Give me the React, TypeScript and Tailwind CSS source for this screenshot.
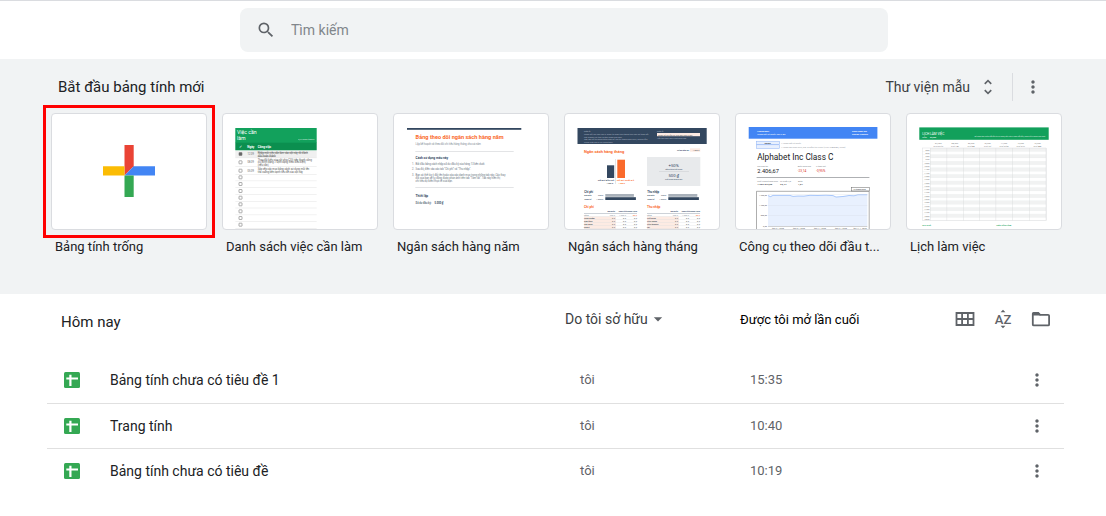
import { useId } from "react";
import type { ReactNode } from "react";
import { MdArrowDropDown, MdMoreVert, MdSearch, MdUnfoldMore } from "react-icons/md";

const NAVY = "#33475f";
const ORANGE = "#fa6a2c";

function Thumb({ children }: { children: ReactNode }) {
  return (
    <svg viewBox="0 0 154 115" className="block w-full" aria-hidden="true" fontFamily="Roboto, sans-serif">
      {children}
    </svg>
  );
}

function BlankThumb() {
  return (
    <Thumb>
      <g transform="translate(51 31)">
        <path fill="#ea4335" d="M21.5 0H30.7V21.3L21.5 30.5Z" />
        <path fill="#4285f4" d="M30.7 21.3H52V30.5H21.5Z" />
        <path fill="#34a853" d="M21.5 30.5H30.7V52H21.5Z" />
        <path fill="#fbbc04" d="M0 21.3H21.5V30.5H0Z" />
      </g>
    </Thumb>
  );
}

function TodoThumb() {
  const boxes = [40, 48.3, 56.7, 63.3, 70, 77, 83.7, 90.3, 97.3, 104, 110.7];
  const lines = [43.7, 52.3, 60, 66.7, 73.5, 80.3, 87, 93.8, 100.7, 107.3, 114];
  return (
    <Thumb>
      <rect x="12.3" y="14" width="81.4" height="15" fill="#12a15c" />
      <rect x="12.3" y="28.7" width="81.4" height="7.6" fill="#0b8f4f" />
      <g fill="#fff">
        <text x="14" y="20" fontSize="5.2">Việc cần</text>
        <text x="14" y="26" fontSize="5.2">làm</text>
        <text x="75" y="26.2" fontSize="2.4" opacity="0.8">2/3 hoàn thành</text>
        <text x="16" y="34" fontSize="4">✓</text>
        <text x="24.3" y="34" fontSize="3" fontWeight="700">Ngày</text>
        <text x="34.8" y="34" fontSize="3" fontWeight="700">Công việc</text>
      </g>
      <rect x="12.3" y="37" width="81.4" height="6.7" fill="#f0f0f0" />
      {lines.map((y) => (
        <rect key={y} x="12.3" y={y} width="81.4" height="0.4" fill="#dcdcdc" />
      ))}
      {boxes.map((y, i) => (
        <rect key={y} x="16" y={y - 1.5} width="3" height="3" rx="0.4" fill={i === 0 ? "#666" : "#fff"} stroke="#777" strokeWidth="0.6" />
      ))}
      <g fill="#666" fontSize="2.6">
        <text x="24.5" y="41">12.09</text>
        <text x="24.5" y="49.3">08.09</text>
        <text x="24.5" y="57.7">05.09</text>
        <g fill="#555">
          <text x="34.8" y="39.5" textDecoration="line-through">Nhập mỗi việc cần làm vào cột này rồi đánh</text>
          <text x="34.8" y="42.8" textDecoration="line-through">dấu hoàn thành</text>
          <text x="34.8" y="46.5">Thay đổi kiểu của cột chia CSS trên thanh công</text>
          <text x="34.8" y="49.3">cụ (Định dạng &gt; Định dạng theo điều kiện)</text>
          <text x="34.8" y="52">(nếu cần)</text>
          <text x="34.8" y="56.2">Sắp xếp các mục bằng cách sử dụng mũi tên</text>
          <text x="34.8" y="59.2">thả xuống bên cạnh tiêu đề của cột này</text>
        </g>
      </g>
    </Thumb>
  );
}

function AnnualThumb() {
  return (
    <Thumb>
      <rect x="13" y="14" width="114.3" height="1.8" fill={NAVY} />
      <text x="21.6" y="24.8" fontSize="5.6" fontWeight="700" fill={ORANGE}>Bảng theo dõi ngân sách hàng năm</text>
      <text x="21.6" y="31.2" fontSize="2.6" fill="#7d8791">Lập kế hoạch và theo dõi chi tiêu hàng tháng cho cả năm</text>
      <rect x="21.3" y="37" width="98.4" height="0.6" fill="#d0d3d6" />
      <text x="21.6" y="44.5" fontSize="3.2" fontWeight="700" fill={NAVY}>Cách sử dụng mẫu này</text>
      <g fontSize="2.6" fill="#68737e">
        <text x="18" y="50.5">1.</text>
        <text x="21.6" y="50.5">Bắt đầu bằng cách nhập số dư đầu kỳ của hàng 13 bên dưới.</text>
        <text x="18" y="56">2.</text>
        <text x="21.6" y="56">Sau đó, điền vào các tab "Chi phí" và "Thu nhập".</text>
        <text x="18" y="62">3.</text>
        <text x="21.6" y="62">Bạn có thể tùy ý đổi tên hoặc xóa các danh mục trong những tab này. Các thay</text>
        <text x="21.6" y="65">đổi của bạn sẽ tự động được phản ánh trên tab "Tóm tắt". Tab này hiển thị</text>
        <text x="21.6" y="68">chi tiêu dự kiến/thực tế của bạn.</text>
      </g>
      <rect x="21.3" y="73.4" width="98.4" height="0.6" fill="#d0d3d6" />
      <text x="21.6" y="83" fontSize="3.2" fontWeight="700" fill={NAVY}>Thiết lập</text>
      <text x="21.6" y="89.5" fontSize="2.6" fontWeight="700" fill="#68737e">Số dư đầu kỳ:</text>
      <text x="40.5" y="89.5" fontSize="2.6" fontWeight="700" fill={NAVY}>5.000 ₫</text>
    </Thumb>
  );
}

function BudgetTable({ x, title, rows }: { x: number; title: string; rows: string[] }) {
  return (
    <g>
      <text x={x} y="93.8" fontSize="3.2" fontWeight="700" fill={ORANGE}>{title}</text>
      <g fontSize="2.2" fontWeight="700" fill={NAVY}>
        <text x={x + 31} y="98.2" textAnchor="end">Dự kiến</text>
        <text x={x + 42} y="98.2" textAnchor="end">Thực tế</text>
        <text x={x + 53} y="98.2" textAnchor="end">Chênh lệch</text>
      </g>
      <rect x={x} y="99.2" width="53" height="0.5" fill="#9aa5b1" />
      <rect x={x} y="102.5" width="32" height="12.5" fill="#fdebe3" />
      {rows.map((row, i) => {
        const y = 101.9 + i * 3;
        const ink = i === 0 ? "#8e979f" : "#4d545c";
        return (
          <g key={row} fontSize="2.1" fill={ink}>
            <rect x={x} y={y + 0.6} width="53" height="0.3" fill="#d8dbde" />
            <text x={x} y={y} fontWeight="700">{row}</text>
            <text x={x + 31} y={y} textAnchor="end">{i === 0 ? "950 ₫" : "0 ₫"}</text>
            <text x={x + 42} y={y} textAnchor="end">{i === 0 ? "1.000 ₫" : "0 ₫"}</text>
            <text x={x + 53} y={y} textAnchor="end" fill={i === 0 ? ORANGE : ink}>{i === 0 ? "-50 ₫" : "0 ₫"}</text>
          </g>
        );
      })}
    </g>
  );
}

function PlannedBars({ x, title, gray, dark }: { x: number; title: string; gray: number; dark: number }) {
  return (
    <g fontSize="2.1" fontWeight="700" fill={NAVY}>
      <text x={x} y="78.5" fontSize="2.8">{title}</text>
      <text x={x} y="82.4">Dự kiến</text>
      <text x={x + 19} y="82.4" textAnchor="end" fontWeight="400">950 ₫</text>
      <text x={x} y="85.7">Thực tế</text>
      <text x={x + 19} y="85.7" textAnchor="end" fontWeight="400">1.000 ₫</text>
      <rect x={x + 21} y="80" width={gray} height="2.8" fill="#a9b1ba" />
      <rect x={x + 21} y="83.2" width={dark} height="2.8" />
    </g>
  );
}

function MonthlyThumb() {
  return (
    <Thumb>
      <rect x="12.5" y="14" width="129.2" height="16" fill={NAVY} />
      <g fontSize="2.2" fill="#a9b4c0">
        <text x="19" y="18" fontWeight="700">LƯU Ý:</text>
        <text x="19" y="21">Nhập dữ liệu vào các ô được tô màu trên trang tính này để theo dõi</text>
        <text x="19" y="23.5">các khoản chi tiêu và thu nhập của bạn.</text>
        <text x="19" y="26">Tab này sẽ tự động tổng hợp số liệu từ trang Giao dịch, không cần</text>
        <text x="19" y="28.5">chỉnh sửa các ô có công thức.</text>
        <text x="92" y="18" fontWeight="700">LƯU Ý:</text>
        <text x="92" y="25">Hãy tạo bản sao của trang này</text>
      </g>
      <rect x="92" y="19" width="43" height="3.2" fill="#fdebe3" />
      <text x="93" y="21.5" fontSize="2.1" fill="#555">Nhập số dư đầu kỳ của bạn vào ô này</text>
      <text x="19" y="38.8" fontSize="4" fontWeight="700" fill={ORANGE}>Ngân sách hàng tháng</text>
      <text x="112" y="36.8" fontSize="2" fontWeight="700" fill={NAVY}>Số dư đầu kỳ:</text>
      <rect x="125" y="34.3" width="10.3" height="3.4" fill="#fdebe3" />
      <text x="134.5" y="36.9" fontSize="2" textAnchor="end" fill="#555">1.000 ₫</text>
      <rect x="42" y="51.3" width="7.2" height="12.7" fill={NAVY} />
      <rect x="52.3" y="45.7" width="7.7" height="18.3" fill={ORANGE} />
      <rect x="50.5" y="45" width="0.4" height="25" fill="#bcc1c6" />
      <g fontSize="2.5" fontWeight="700">
        <text x="49.3" y="66.9" textAnchor="end" fill={NAVY}>SỐ DƯ ĐẦU KỲ</text>
        <text x="51.8" y="66.9" fill={ORANGE}>SỐ DƯ CUỐI KỲ</text>
        <text x="48" y="69.6" fontSize="1.9" textAnchor="end" fill={NAVY}>1.000 ₫</text>
        <text x="53.5" y="69.6" fontSize="1.9" fill={ORANGE}>1.500 ₫</text>
      </g>
      <rect x="82" y="43" width="53.3" height="29" fill="#e8eaec" />
      <g textAnchor="middle" fill={NAVY}>
        <text x="108.7" y="53" fontSize="4.2">+50%</text>
        <text x="108.7" y="55.6" fontSize="2">Tăng tổng tiết kiệm</text>
        <text x="108.7" y="63.4" fontSize="4.2">500 ₫</text>
        <text x="108.7" y="66" fontSize="2">Tiết kiệm tháng này</text>
      </g>
      <rect x="94" y="57.5" width="30" height="0.4" fill="#c2c6ca" />
      <PlannedBars x={19.3} title="Chi phí" gray={28.6} dark={30.6} />
      <PlannedBars x={82.3} title="Thu nhập" gray={29} dark={30.6} />
      <BudgetTable x={19} title="Chi phí" rows={["Tổng", "Thực phẩm", "Quà tặng", "Sức khỏe", "Nhà ở"]} />
      <BudgetTable x={82} title="Thu nhập" rows={["Tổng", "Tiết kiệm", "Tiền lương", "Tiền thưởng", "Lãi"]} />
    </Thumb>
  );
}

function InvestThumb() {
  const gridY = [80.7, 91, 101.4, 112];
  const yLabels = ["1.600,00", "1.200,00", "800,00", "0,00"];
  return (
    <Thumb>
      <rect x="12.7" y="13" width="128.7" height="11.7" fill="#4285f4" />
      <g fill="#fff" fontSize="2.3">
        <text x="21.3" y="17.8" fontWeight="700">Hướng dẫn:</text>
        <text x="21.3" y="20.6">Nhập mã cổ phiếu vào ô B5</text>
        <text x="116" y="17.8" fontWeight="700">Chọn ngày lưu</text>
        <text x="116" y="21.2" fontWeight="700">Google Finance</text>
      </g>
      <rect x="20.4" y="27.2" width="23.2" height="3.4" fill="#e8f0fe" stroke="#8ab0f5" strokeWidth="0.5" />
      <rect x="20.4" y="30.8" width="23.2" height="3.6" fill="#e8f0fe" stroke="#8ab0f5" strokeWidth="0.5" />
      <text x="31.7" y="29.9" fontSize="2.4" fontWeight="700" textAnchor="middle" fill="#3c4043">GOOG</text>
      <g fontSize="2.2" fill="#9aa0a6">
        <text x="44.5" y="29.8">← Nhập mã cổ phiếu</text>
        <text x="44.5" y="33.8">← Nhập sàn giao dịch, đây là phần tùy chọn (ví dụ: NASDAQ, NYSE)</text>
      </g>
      <text x="21.2" y="45.5" fontSize="8.3" fill="#202124">Alphabet Inc Class C</text>
      <g fontSize="2.2" fill="#80868b">
        <text x="21.2" y="52.8">Giá hiện tại</text>
        <text x="61.7" y="52.8">Biến động giá</text>
        <text x="80" y="52.8">% thay đổi</text>
        <text x="21.2" y="68.2">Khối lượng trung bình</text>
        <text x="44" y="68.2">Tỷ suất P/E</text>
        <text x="62" y="68.2">Beta</text>
      </g>
      <text x="21.2" y="59" fontSize="5.7" fill="#202124">2.406,67</text>
      <g fontSize="3.2" fill="#d93025">
        <text x="61.7" y="58.4">-23,14</text>
        <text x="80" y="58.4">-0,95%</text>
      </g>
      <rect x="20.6" y="63" width="112.8" height="0.8" fill="#9a9da0" />
      <g fontSize="2.5" fontWeight="700" fill="#3c4043">
        <text x="21.2" y="71.3">1.359.549,00</text>
        <text x="44" y="71.3">33,44</text>
        <text x="62" y="71.3">1,01</text>
      </g>
      <rect x="115.3" y="73.6" width="18" height="3.4" fill="#fff" stroke="#666" strokeWidth="0.5" />
      <text x="117" y="76.2" fontSize="2.2" fill="#3c4043">12 tháng qua</text>
      <path d="M20.5 115V77.3H133.2V115" fill="none" stroke="#777" strokeWidth="0.6" />
      <path d="M32 81.6L34.5 82.6L37 81.4H54L57 82.4L62 82L68 82.1L74 81.3L82 81.5L90 81.2L97 81.6L100 83L107 82.5L113 81.5L118 81.8L122 80.7H131.3V112H32Z" fill="#e8f0fe" />
      <path d="M32 81.6L34.5 82.6L37 81.4H54L57 82.4L62 82L68 82.1L74 81.3L82 81.5L90 81.2L97 81.6L100 83L107 82.5L113 81.5L118 81.8L122 80.7H131.3" fill="none" stroke="#5c97f6" strokeWidth="0.5" />
      {gridY.map((y, i) => (
        <g key={y}>
          <rect x="32" y={y} width="99.3" height="0.3" fill={i === 3 ? "#5f6368" : "#d3dae4"} />
          <text x="31" y={y + 0.8} fontSize="2.1" textAnchor="end" fill="#5f6368">{yLabels[i]}</text>
        </g>
      ))}
      {[42, 63, 84, 105, 124].map((x, i) => (
        <text key={x} x={x} y="114.9" fontSize="2.1" textAnchor="middle" fill="#5f6368">{`thg ${i * 2 + 3} 1, 2020`}</text>
      ))}
    </Thumb>
  );
}

function ScheduleThumb() {
  const cols = [23, 39.7, 56, 72.3, 88.7, 105.3, 122, 139];
  const days = ["CN", "HAI", "BA", "TƯ", "NĂM", "SÁU", "BẢY"];
  const rows = Array.from({ length: 22 }, (_, i) => i);
  return (
    <Thumb>
      <rect x="12.3" y="13.4" width="129.4" height="12.4" fill="#12a05b" />
      <g fill="#fff">
        <text x="15.3" y="20.6" fontSize="3.2">LỊCH LÀM VIỆC</text>
        <text x="15.3" y="23.6" fontSize="1.9">Tuần:</text>
        <text x="23" y="23.6" fontSize="1.9" fontWeight="700">07/Th9</text>
        <text x="138" y="22.8" fontSize="1.8" textAnchor="end" opacity="0.8">Để nhập thời điểm bắt đầu từ T2 hàng, hãy sửa ô ngày bắt đầu, bảng sẽ tự động cập nhật</text>
      </g>
      {days.map((day, i) => (
        <g key={day} fontSize="2" textAnchor="middle" fill="#777">
          <text x={(cols[i] + cols[i + 1]) / 2} y="30.4">{`${String(i + 7).padStart(2, "0")}/Th9`}</text>
          <text x={(cols[i] + cols[i + 1]) / 2} y="32.7">{i === 0 ? "CHỦ NHẬT" : `THỨ ${day}`}</text>
        </g>
      ))}
      {rows.map((i) => (
        <g key={i}>
          {i % 2 === 0 && <rect x="23" y={34 + i * 3.3} width="116" height="3.3" fill="#f1f2f2" />}
          <text x="22.3" y={36.5 + i * 3.3} fontSize="2" textAnchor="end" fill="#777">{`${8 + Math.floor(i / 2)}:${i % 2 ? "30" : "00"}`}</text>
          <rect x="15.3" y={37.2 + i * 3.3} width="123.7" height="0.25" fill="#e3e5e7" />
        </g>
      ))}
      <rect x="15.3" y="34" width="123.7" height="72.6" fill="none" stroke="#d5d7da" strokeWidth="0.4" />
      {cols.map((x) => (
        <rect key={x} x={x} y="34" width="0.4" height="72.6" fill="#d6d8da" />
      ))}
      <g fontSize="2.2" fontWeight="700" fill="#12a05b">
        <text x="15.3" y="112">GHI CHÚ</text>
        <text x="89.3" y="112">VIỆC CẦN LÀM</text>
      </g>
    </Thumb>
  );
}

const templates: { label: string; thumb: ReactNode; marked?: boolean }[] = [
  { label: "Bảng tính trống", thumb: <BlankThumb />, marked: true },
  { label: "Danh sách việc cần làm", thumb: <TodoThumb /> },
  { label: "Ngân sách hàng năm", thumb: <AnnualThumb /> },
  { label: "Ngân sách hàng tháng", thumb: <MonthlyThumb /> },
  { label: "Công cụ theo dõi đầu t...", thumb: <InvestThumb /> },
  { label: "Lịch làm việc", thumb: <ScheduleThumb /> },
];

const files = [
  { name: "Bảng tính chưa có tiêu đề 1", owner: "tôi", opened: "15:35" },
  { name: "Trang tính", owner: "tôi", opened: "10:40" },
  { name: "Bảng tính chưa có tiêu đề", owner: "tôi", opened: "10:19" },
];

function SheetIcon() {
  return (
    <svg viewBox="0 0 16 16" className="size-4 shrink-0" aria-hidden="true">
      <rect width="16" height="16" rx="1.5" fill="#34a853" />
      <path d="M5.3 2.7H7.5V5.5H14V7.5H7.5V14H5.3V7.5H2.3V5.5H5.3Z" fill="#fff" />
    </svg>
  );
}

function GridIcon() {
  return (
    <svg viewBox="0 0 20 20" className="size-5" aria-hidden="true">
      <path d="M1.5 4H18.5V16H1.5ZM1.5 10H18.5M7.1 4V16M12.9 4V16" fill="none" stroke="currentColor" strokeWidth="1.8" />
    </svg>
  );
}

function SortIcon() {
  return (
    <svg viewBox="0 0 20 20" className="size-5" aria-hidden="true" fill="currentColor">
      <path d="M10 0.8L12.4 3.2H7.6ZM10 19.2L7.6 16.8H12.4Z" />
      <text x="10" y="14.8" fontSize="13" fontWeight="500" textAnchor="middle" fontFamily="Roboto, sans-serif">AZ</text>
    </svg>
  );
}

function FolderIcon() {
  return (
    <svg viewBox="0 0 20 20" className="size-5" aria-hidden="true">
      <path d="M2.6 3.9H7.3L9.2 5.8H17.1Q18.1 5.8 18.1 6.8V15.4Q18.1 16.4 17.1 16.4H2.8Q1.8 16.4 1.8 15.4V4.8Q1.8 3.9 2.6 3.9Z" fill="none" stroke="currentColor" strokeWidth="1.8" />
      <path d="M1.8 3.6H7.6L9.6 6.4H1.8Z" fill="currentColor" />
    </svg>
  );
}

export default function App() {
  const searchId = useId();
  return (
    <div className="h-screen overflow-hidden bg-white font-[Roboto,sans-serif] text-[#202124]">
      <header className="border-t border-[#dadce0] py-[7px] pr-[218px] pl-60">
        <div className="flex h-11 items-center rounded-lg bg-[#f1f3f4] pl-4">
          <label htmlFor={searchId} aria-label="Tìm kiếm" className="mr-[15px] text-[#5f6368]">
            <MdSearch className="size-5" />
          </label>
          <input
            id={searchId}
            type="text"
            placeholder="Tìm kiếm"
            className="min-w-0 flex-1 bg-transparent text-sm outline-none placeholder:text-[#80868b]"
          />
        </div>
      </header>

      <section className="bg-[#f1f3f4] pt-3.5 pr-11 pb-[37px] pl-[51px]">
        <div className="mb-3 flex h-7 items-center justify-between">
          <h2 className="pl-[7px] text-[15px] leading-5">Bắt đầu bảng tính mới</h2>
          <div className="flex h-full items-center text-[#5f6368]">
            <button type="button" className="flex items-center gap-2 pr-3.5 text-sm text-[#3c4043]">
              Thư viện mẫu
              <MdUnfoldMore className="size-5 text-[#5f6368]" />
            </button>
            <button type="button" aria-label="Tùy chọn khác" className="flex h-full items-center border-l border-[#dadce0] pr-[19px] pl-2.5">
              <MdMoreVert className="size-5" />
            </button>
          </div>
        </div>
        <ul className="grid grid-cols-6 gap-[15px]">
          {templates.map((t) => (
            <li key={t.label} className="min-w-0">
              <a href="#" className="block">
                <div className="relative">
                  <div className="overflow-hidden rounded border border-[#dadce0] bg-white">{t.thumb}</div>
                  {t.marked && <div className="absolute -inset-2 border-3 border-[#ff0000]" />}
                </div>
                <p className="mt-[7px] truncate px-1 text-[13px] leading-5">{t.label}</p>
              </a>
            </li>
          ))}
        </ul>
      </section>

      <main className="pr-[42px] pl-[47px]">
        <table className="w-full table-fixed border-collapse text-left text-[13px] leading-5">
          <colgroup>
            <col />
            <col className="w-[175px]" />
            <col className="w-[200px]" />
            <col className="w-[124px]" />
          </colgroup>
          <thead>
            <tr className="h-16">
              <th className="pb-2 pl-3.5 text-[15px] font-normal">Hôm nay</th>
              <th className="pb-3.5 font-normal">
                <div className="flex items-center text-[#3c4043]">
                  <select aria-label="Chủ sở hữu" className="appearance-none bg-transparent text-sm">
                    <option>Do tôi sở hữu</option>
                  </select>
                  <MdArrowDropDown className="size-5 text-[#5f6368]" />
                </div>
              </th>
              <th className="pb-3 font-normal text-black">Được tôi mở lần cuối</th>
              <th className="pb-3.5">
                <div className="flex items-center justify-end gap-[18px] pr-[13px] text-[#5f6368]">
                  <button type="button" aria-label="Chế độ xem lưới"><GridIcon /></button>
                  <button type="button" aria-label="Sắp xếp"><SortIcon /></button>
                  <button type="button" aria-label="Mở bộ chọn tệp"><FolderIcon /></button>
                </div>
              </th>
            </tr>
          </thead>
          <tbody>
            {files.map((f) => (
              <tr key={f.name} className="h-[45px] border-b border-[#e0e0e0] last:border-b-0">
                <td className="pl-[17px]">
                  <a href="#" className="flex items-center gap-[30px] text-sm">
                    <SheetIcon />
                    {f.name}
                  </a>
                </td>
                <td className="pl-[15px] text-[#5f6368]">{f.owner}</td>
                <td className="pl-2.5 text-[#5f6368]">{f.opened}</td>
                <td>
                  <div className="flex justify-end pr-[17px] text-[#5f6368]">
                    <button type="button" aria-label="Tùy chọn khác"><MdMoreVert className="size-5" /></button>
                  </div>
                </td>
              </tr>
            ))}
          </tbody>
        </table>
        <h2 className="pt-5 pl-3.5 text-[15px] leading-5">Hôm qua</h2>
      </main>
    </div>
  );
}
